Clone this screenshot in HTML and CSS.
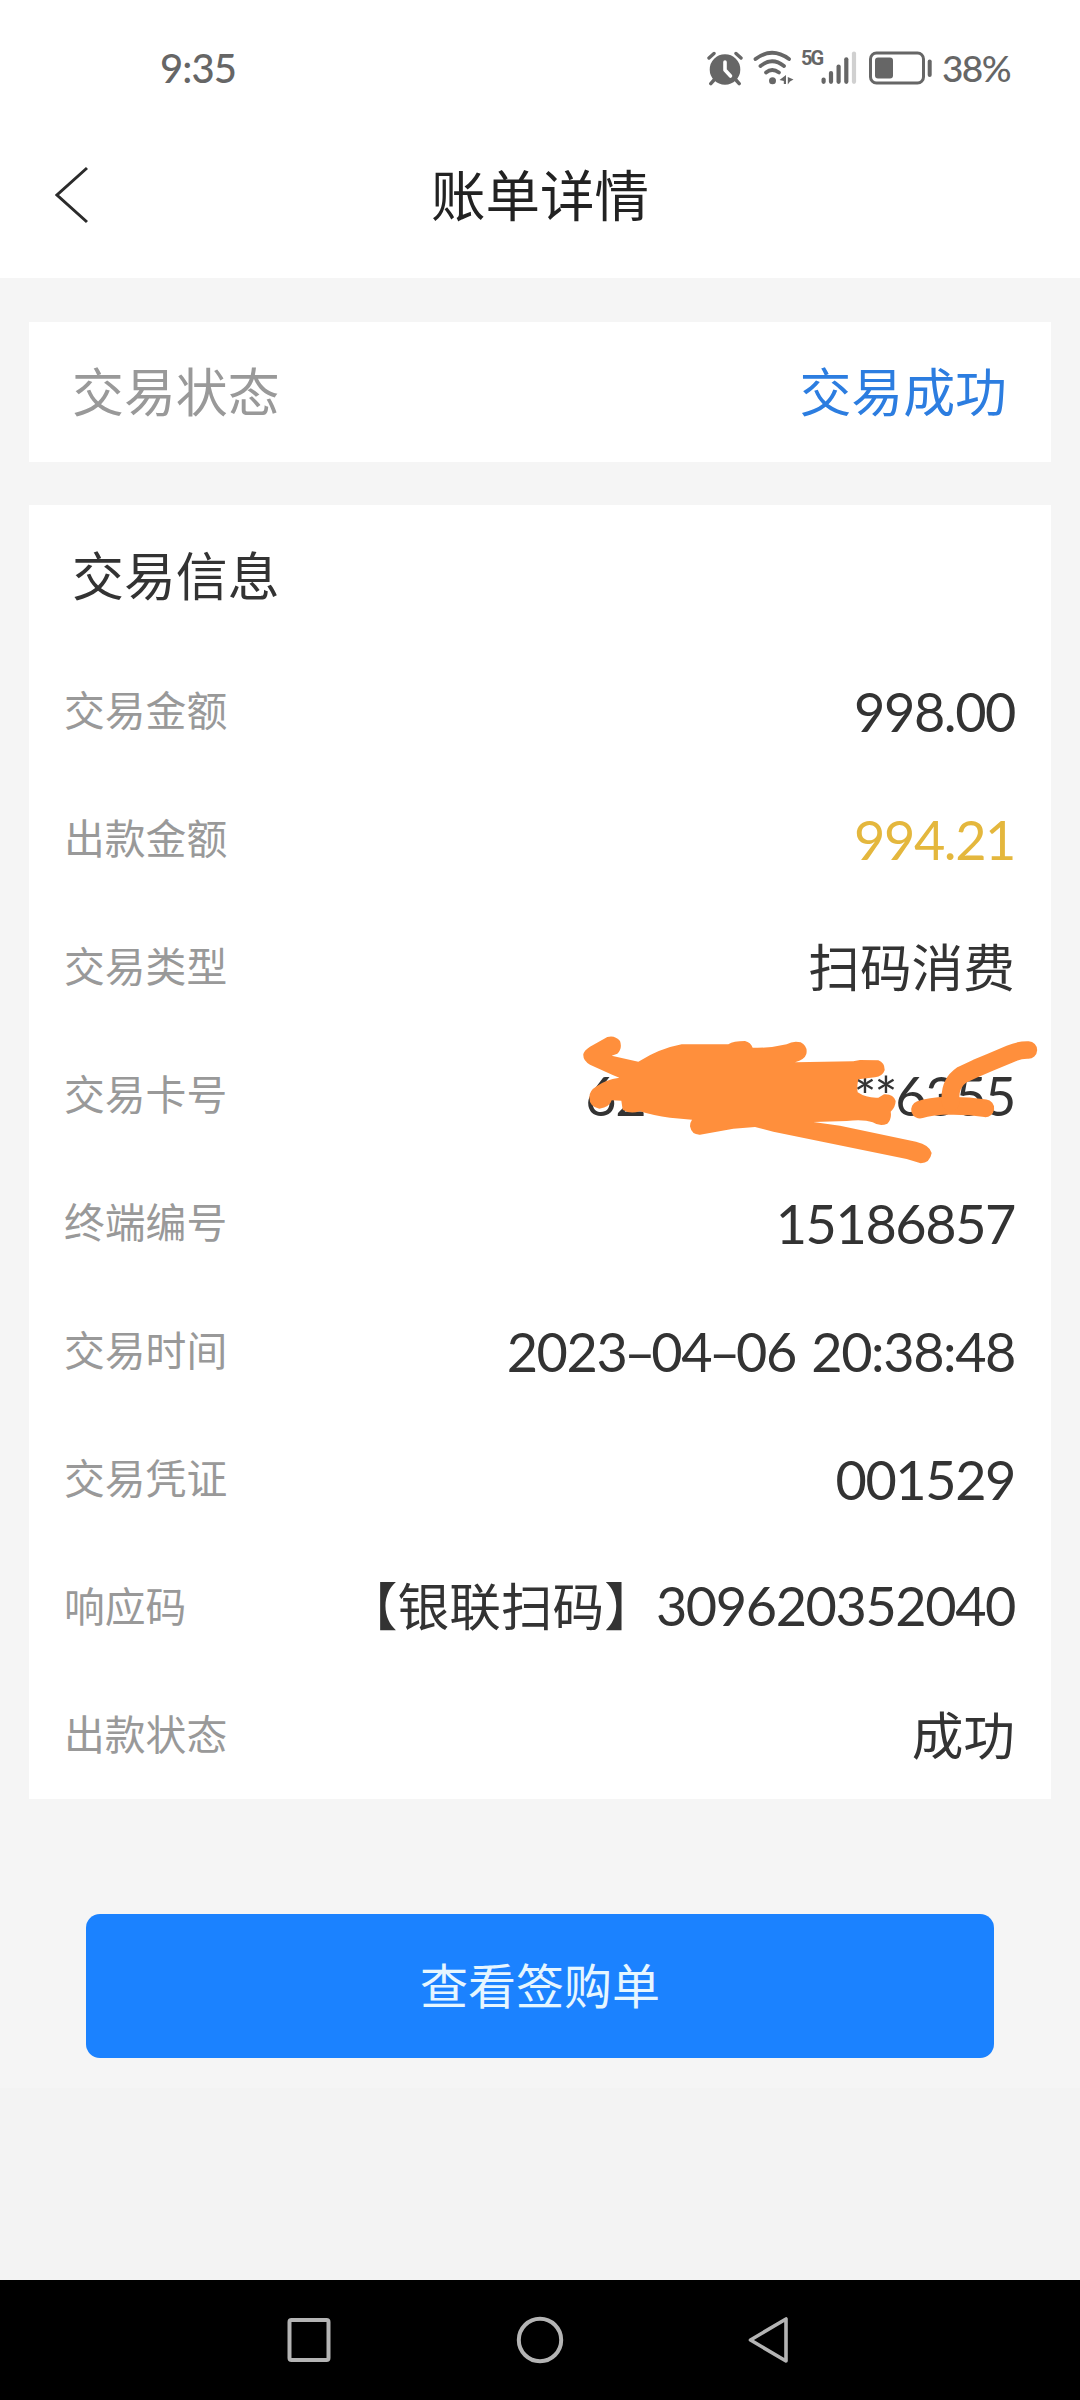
FILE: index.html
```html
<!DOCTYPE html>
<html lang="zh-CN">
    <head>
        <meta charset="utf-8">
        <title>账单详情</title>
        <link rel="stylesheet" href="styles.css">
    </head>
    <body>
    <div id="content">
        <div class="status-bar">
            <span class="clock">9:35</span>
            <div class="status-icons">
                <svg class="icon-alarm" width="36" height="36" viewBox="0 0 36 36">
                    <circle cx="18" cy="19.5" r="15.3" fill="#666"/>
                    <path d="M2 8 L7 3.5 M34 8 L29 3.5 M7 30 L3.8 33.6 M29 30 L32.2 33.6" stroke="#666" stroke-width="3.4" stroke-linecap="round"/>
                    <path d="M18 12 V20 L23.5 26" fill="none" stroke="#fff" stroke-width="3.6" stroke-linecap="round" stroke-linejoin="round"/>
                </svg>
                <svg class="icon-wifi" width="42" height="36" viewBox="0 0 42 36">
                    <g fill="none" stroke="#666" stroke-width="3.8" stroke-linecap="round">
                        <path d="M2.5 9 Q19 -3.5 36 9"/>
                        <path d="M7.5 16 Q19 6.5 31 16"/>
                        <path d="M13 22.5 Q19 17.5 26 22.5"/>
                    </g>
                    <circle cx="19.5" cy="30.7" r="3.5" fill="#666"/>
                    <path d="M33 25 V34 H30.8 V31 L26.5 30 Z M34.8 34.5 V27 L40.5 29.5 L37 31.5 Z" fill="#666"/>
                </svg>
                <span class="network">5G</span>
                <svg class="icon-signal" width="37" height="36" viewBox="0 0 37 36">
                    <g stroke="#666" stroke-width="4.2" stroke-linecap="round">
                        <path d="M3.6 29.5 V31.8"/>
                        <path d="M11 23 V31.8"/>
                        <path d="M18.6 16.5 V31.8"/>
                        <path d="M26.3 9.3 V31.8"/>
                        <path d="M34 3.5 V31.8" stroke="#d0d0d0"/>
                    </g>
                </svg>
                <svg class="icon-battery" width="64" height="36" viewBox="0 0 64 36">
                    <rect x="1.5" y="3" width="53" height="30" rx="6" fill="none" stroke="#666" stroke-width="3"/>
                    <rect x="6" y="7.5" width="18" height="21" rx="3" fill="#666"/>
                    <path d="M60.7 11.5 V25" stroke="#666" stroke-width="4" stroke-linecap="round"/>
                </svg>
                <span class="battery-level">38%</span>
            </div>
        </div>
        <div class="title-bar">
            <svg class="back" width="34" height="58" viewBox="0 0 34 58">
                <path d="M32 2 L2 29 L32 56" fill="none" stroke="#2b2b2b" stroke-width="3"/>
            </svg>
            <h1>账单详情</h1>
        </div>
        <div class="page">
            <div class="card status-card">
                <span class="status-label">交易状态</span>
                <span class="status-value">交易成功</span>
            </div>
            <div class="card info-card">
                <h2>交易信息</h2>
                <div class="row">
                    <span class="label">交易金额</span>
                    <span class="value num">998.00</span>
                </div>
                <div class="row">
                    <span class="label">出款金额</span>
                    <span class="value num amount">994.21</span>
                </div>
                <div class="row">
                    <span class="label">交易类型</span>
                    <span class="value">扫码消费</span>
                </div>
                <div class="row">
                    <span class="label">交易卡号</span>
                    <span class="value num">62<span class="stars">************</span>6355</span>
                    <!-- marker strokes over the card number -->
                    <svg class="scribble" width="500" height="160" viewBox="0 0 1500 480">
                        <g fill="#ff8f3c" stroke="#ff8f3c" stroke-linecap="round" stroke-linejoin="round">
                            <path stroke="none" d="M70 105 Q72 95 90 83 L142 54 Q165 48 180 66 Q188 88 172 104 L155 110 L235 128 Q300 88 365 76 L505 76 Q520 66 555 66 Q572 70 578 86 Q630 88 680 76 Q700 64 722 70 Q744 82 739 105 Q734 122 705 130 L880 127 L900 123 L955 124 Q975 132 974 154 Q968 172 945 175 L895 181 Q890 205 893 220 Q920 238 955 236 L972 226 Q1000 224 1007 246 Q1006 266 992 278 Q996 300 982 314 Q960 324 938 310 Q910 300 860 306 L760 309 L840 320 L1068 368 Q1110 378 1115 402 Q1110 432 1082 433 L1040 420 L640 338 L585 324 L520 329 L420 347 Q395 348 390 322 Q390 310 396 302 L330 296 Q280 290 240 277 Q208 286 188 272 L184 245 L155 244 Q150 264 118 269 Q88 264 88 235 Q88 215 110 202 Q135 182 178 176 L158 168 L90 137 Q68 125 70 105 Z"/>
                            <path fill="none" stroke-width="53" d="M1080 272 Q1110 262 1160 260 L1225 262 L1276 268"/>
                            <path fill="none" stroke-width="53" d="M1172 250 Q1166 195 1205 168 L1250 147 L1290 130 L1350 105 Q1380 92 1405 93"/>
                        </g>
                    </svg>
                </div>
                <div class="row">
                    <span class="label">终端编号</span>
                    <span class="value num">15186857</span>
                </div>
                <div class="row">
                    <span class="label">交易时间</span>
                    <span class="value num date">2023<span class="dash">–</span>04<span class="dash">–</span>06 20:38:48</span>
                </div>
                <div class="row">
                    <span class="label">交易凭证</span>
                    <span class="value num">001529</span>
                </div>
                <div class="row">
                    <span class="label">响应码</span>
                    <span class="value">【银联扫码】<span class="num">309620352040</span></span>
                </div>
                <div class="row">
                    <span class="label">出款状态</span>
                    <span class="value">成功</span>
                </div>
            </div>
            <button class="view-button">查看签购单</button>
        </div>
        <div class="nav-bar">
            <svg width="46" height="50" viewBox="0 0 46 50">
                <rect x="3.5" y="5" width="39" height="40" rx="2" fill="none" stroke="#b4b4b4" stroke-width="4"/>
            </svg>
            <svg width="50" height="50" viewBox="0 0 50 50">
                <circle cx="25" cy="25" r="21.2" fill="none" stroke="#b4b4b4" stroke-width="4"/>
            </svg>
            <svg width="46" height="50" viewBox="0 0 46 50">
                <path d="M38 4 V46 L2.5 25 Z" fill="none" stroke="#b4b4b4" stroke-width="3.6" stroke-linejoin="round"/>
            </svg>
        </div>
    </div>
    </body>
</html>
```
FILE: styles.css
```css
body {
    margin: 0;
    background-color: #f3f3f3;
    font-family: "Noto Sans CJK SC", sans-serif;
    color: #333;
}
#content {
    display: flex;
    flex-direction: column;
    height: 2400px;
    overflow: hidden;
}
h1, h2 {
    margin: 0;
    font-weight: 400;
}
.status-bar {
    display: flex;
    justify-content: space-between;
    align-items: center;
    box-sizing: border-box;
    height: 136px;
    padding: 0 70px 0 160px;
    background-color: #fff;
    color: #666;
    font-family: Lato, sans-serif;
}
.clock {
    font-size: 40px;
    font-weight: 500;
    letter-spacing: -0.9px;
}
.status-icons {
    display: flex;
    align-items: center;
}
.icon-wifi {
    margin-left: 10px;
}
.network {
    width: 19px;
    margin: -20px 0 0 6px;
    font: 700 20px/20px "Liberation Sans Narrow", Roboto, sans-serif;
    letter-spacing: -2px;
}
.icon-battery {
    margin-left: 12px;
}
.battery-level {
    width: 68px;
    margin-left: 9px;
    padding-bottom: 2px;
    font-size: 37px;
    font-weight: 500;
    letter-spacing: -1.6px;
}
.title-bar {
    display: flex;
    justify-content: center;
    align-items: center;
    position: relative;
    height: 142px;
    background-color: #fff;
}
.title-bar h1 {
    margin-top: -29px;
    font-size: 54.5px;
    line-height: 80px;
    color: #222;
}
.back {
    position: absolute;
    left: 55px;
    top: 30px;
}
.page {
    display: flex;
    flex-direction: column;
    box-sizing: border-box;
    height: 1810px;
    padding: 44px 29px 0;
    background-color: #f5f5f5;
}
.card {
    background-color: #fff;
}
.status-card {
    display: flex;
    justify-content: space-between;
    align-items: center;
    box-sizing: border-box;
    height: 140px;
    padding: 0 44px 5px 43px;
    font-size: 51.9px;
    line-height: 80px;
}
.status-label {
    color: #999;
}
.status-value {
    color: #2c7de0;
}
.info-card {
    height: 1294px;
    margin-top: 43px;
}
.info-card h2 {
    padding: 6px 43px 10px;
    font-size: 51.9px;
    line-height: 126px;
}
.row {
    display: flex;
    justify-content: space-between;
    align-items: center;
    position: relative;
    height: 128px;
    padding: 0 36px 0 35px;
}
.label {
    padding-bottom: 4px;
    font-size: 40.8px;
    line-height: 60px;
    color: #999;
}
.value {
    padding-bottom: 4px;
    font-size: 51.7px;
    line-height: 80px;
    white-space: nowrap;
}
.num {
    padding: 2px 0 0;
    font-family: Lato, "Noto Sans CJK SC", sans-serif;
    font-size: 54px;
    letter-spacing: -1.4px;
}
.amount {
    color: #e4b73d;
}
.stars {
    letter-spacing: -2.1px;
}
.date {
    word-spacing: 3px;
}
.dash {
    margin: 0 -3px 0 -2px;
}
.scribble {
    position: absolute;
    left: 531px;
    top: -12px;
}
.view-button {
    height: 144px;
    margin: 115px 57px 0;
    padding: 0 0 6px;
    border: 0;
    border-radius: 14px;
    background-color: #1b82ff;
    color: #e6f6ff;
    font-family: inherit;
    font-size: 48px;
}
.nav-bar {
    display: flex;
    justify-content: center;
    align-items: center;
    gap: 183px;
    height: 120px;
    margin-top: auto;
    background-color: #000;
}
```
